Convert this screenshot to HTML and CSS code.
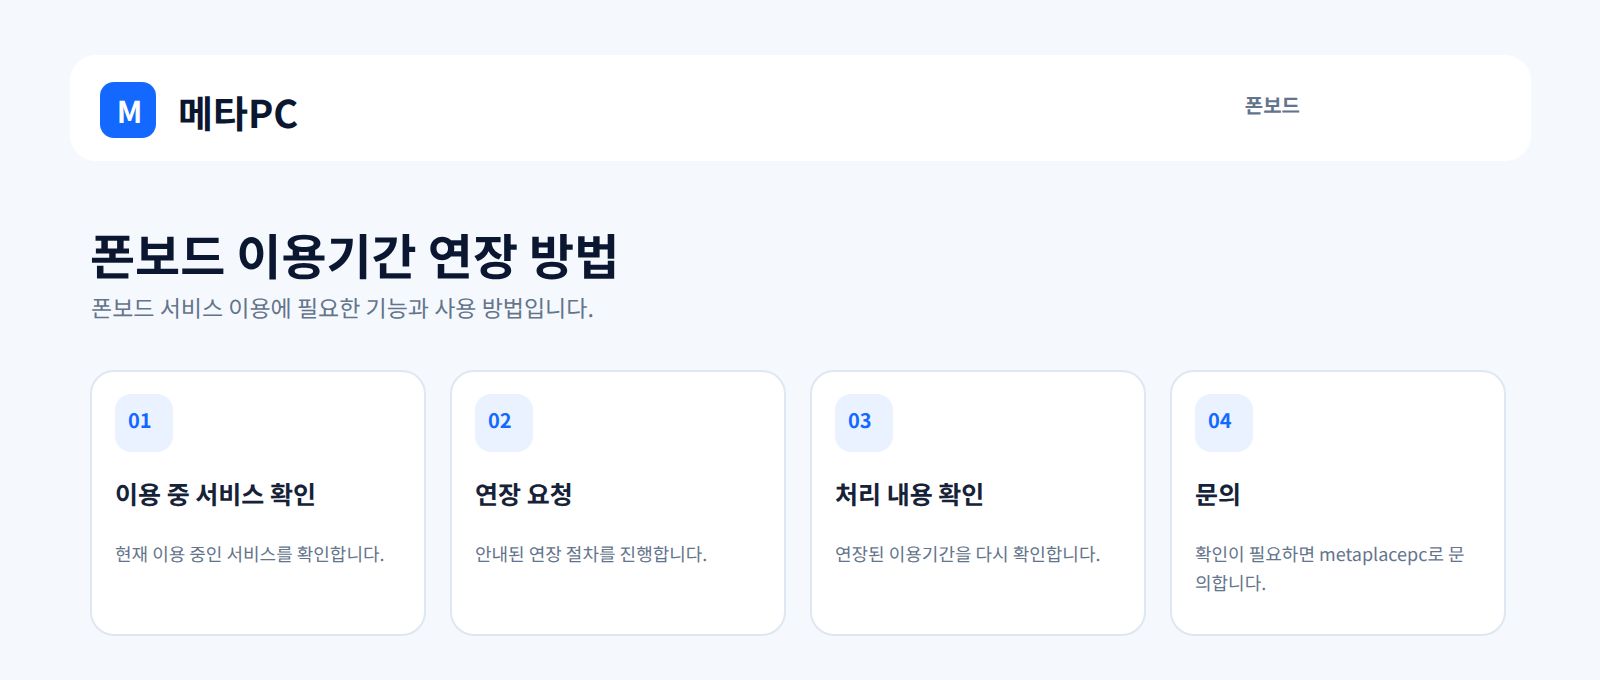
FILE: index.html
```
<!DOCTYPE html>
<html lang="ko">

<head>
    <meta charset="UTF-8">
    <meta name="viewport" content="width=device-width, initial-scale=1">
    <title>폰보드 이용기간 연장 방법 - 메타PC</title>
    <link rel="stylesheet" href="styles.css">
</head>

<body>
    <header class="header">
        <div class="brand">
            <span class="brand-mark">M</span>
            <span class="brand-name">메타PC</span>
        </div>
        <span class="header-label">폰보드</span>
    </header>

    <main class="content">
        <h1 class="title">폰보드 이용기간 연장 방법</h1>
        <p class="subtitle">폰보드 서비스 이용에 필요한 기능과 사용 방법입니다.</p>

        <section class="steps">
            <article class="card">
                <span class="card-number">01</span>
                <h2 class="card-title">이용 중 서비스 확인</h2>
                <p class="card-text">현재 이용 중인 서비스를 확인합니다.</p>
            </article>
            <article class="card">
                <span class="card-number">02</span>
                <h2 class="card-title">연장 요청</h2>
                <p class="card-text">안내된 연장 절차를 진행합니다.</p>
            </article>
            <article class="card">
                <span class="card-number">03</span>
                <h2 class="card-title">처리 내용 확인</h2>
                <p class="card-text">연장된 이용기간을 다시 확인합니다.</p>
            </article>
            <article class="card">
                <span class="card-number">04</span>
                <h2 class="card-title">문의</h2>
                <p class="card-text">확인이 필요하면 metaplacepc로 문의합니다.</p>
            </article>
        </section>
    </main>
</body>

</html>
```
FILE: styles.css
```
* {
    box-sizing: border-box;
}

body {
    margin: 0;
    padding: 55px 69px 44px 70px;
    background: #f5f9fe;
    color: #0b1730;
    font-family: "Noto Sans CJK JP", "Noto Sans CJK KR", sans-serif;
    font-feature-settings: "locl" 0;
    text-rendering: geometricPrecision;
}

.header {
    display: flex;
    justify-content: space-between;
    align-items: flex-start;
    padding: 27px 231px 19px 30px;
    background: #fff;
    border-radius: 26px;
}

.brand {
    display: flex;
    align-items: flex-start;
    gap: 22px;
}

.brand-mark {
    width: 56px;
    height: 56px;
    padding-left: 3px;
    border-radius: 14px;
    background: #1369ff;
    color: #fff;
    font-size: 30px;
    font-weight: 700;
    line-height: 56px;
    text-align: center;
}

.brand-name {
    font-size: 38px;
    font-weight: 700;
    line-height: 60px;
}

.header-label {
    color: #64748b;
    font-size: 20px;
    font-weight: 700;
    line-height: 46px;
}

.content {
    padding: 58px 25px 0 20px;
}

.title {
    margin: 0;
    font-size: 49px;
    font-weight: 700;
    line-height: 72px;
}

.subtitle {
    margin: 0 0 46px;
    padding-left: 1px;
    color: #64748b;
    font-size: 23px;
    line-height: 33px;
}

.steps {
    display: grid;
    grid-template-columns: repeat(4, 1fr);
    gap: 24px;
}

.card {
    min-height: 266px;
    padding: 22px 23px;
    background: #fff;
    border: 2px solid #dfe7f2;
    border-radius: 24px;
}

.card-number {
    display: block;
    width: 58px;
    height: 58px;
    padding-left: 13px;
    border-radius: 16px;
    background: #eaf2ff;
    color: #1369ff;
    font-size: 20px;
    font-weight: 700;
    line-height: 52px;
}

.card-title {
    margin: 23px 0 27px;
    color: #162238;
    font-size: 25px;
    font-weight: 700;
    line-height: 38px;
}

.card-text {
    margin: 0;
    color: #64748b;
    font-size: 18px;
    line-height: 29px;
    word-break: break-all;
}
```
